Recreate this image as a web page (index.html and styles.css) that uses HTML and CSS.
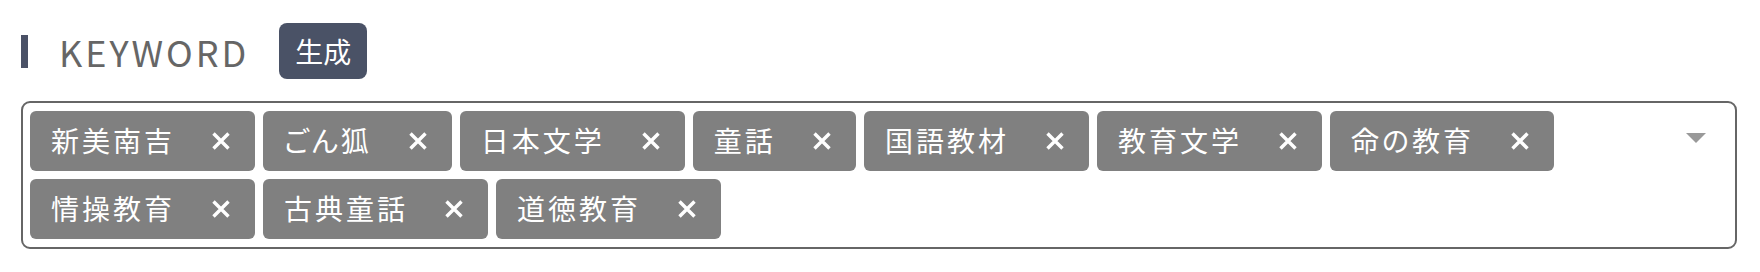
FILE: index.html
```html
<!DOCTYPE html>
<html lang="ja">
<head>
<meta charset="utf-8">
<title>KEYWORD</title>
<link rel="stylesheet" href="styles.css">
</head>
<body>
<div class="page">
  <div class="header">
    <span class="bar"></span>
    <h2 class="title">KEYWORD</h2>
    <button class="gen">生成</button>
  </div>
  <div class="select">
    <div class="tags">
      <span class="tag"><span class="label">新美南吉</span><svg class="x" viewBox="0 0 18 18"><path d="M1.5 1.5L16.5 16.5M16.5 1.5L1.5 16.5"/></svg></span>
      <span class="tag"><span class="label">ごん狐</span><svg class="x" viewBox="0 0 18 18"><path d="M1.5 1.5L16.5 16.5M16.5 1.5L1.5 16.5"/></svg></span>
      <span class="tag"><span class="label">日本文学</span><svg class="x" viewBox="0 0 18 18"><path d="M1.5 1.5L16.5 16.5M16.5 1.5L1.5 16.5"/></svg></span>
      <span class="tag"><span class="label">童話</span><svg class="x" viewBox="0 0 18 18"><path d="M1.5 1.5L16.5 16.5M16.5 1.5L1.5 16.5"/></svg></span>
      <span class="tag"><span class="label">国語教材</span><svg class="x" viewBox="0 0 18 18"><path d="M1.5 1.5L16.5 16.5M16.5 1.5L1.5 16.5"/></svg></span>
      <span class="tag"><span class="label">教育文学</span><svg class="x" viewBox="0 0 18 18"><path d="M1.5 1.5L16.5 16.5M16.5 1.5L1.5 16.5"/></svg></span>
      <span class="tag"><span class="label">命の教育</span><svg class="x" viewBox="0 0 18 18"><path d="M1.5 1.5L16.5 16.5M16.5 1.5L1.5 16.5"/></svg></span>
      <span class="tag"><span class="label">情操教育</span><svg class="x" viewBox="0 0 18 18"><path d="M1.5 1.5L16.5 16.5M16.5 1.5L1.5 16.5"/></svg></span>
      <span class="tag"><span class="label">古典童話</span><svg class="x" viewBox="0 0 18 18"><path d="M1.5 1.5L16.5 16.5M16.5 1.5L1.5 16.5"/></svg></span>
      <span class="tag"><span class="label">道徳教育</span><svg class="x" viewBox="0 0 18 18"><path d="M1.5 1.5L16.5 16.5M16.5 1.5L1.5 16.5"/></svg></span>
    </div>
    <svg class="caret" viewBox="0 0 20 10"><path d="M0 0H20L10 10Z"/></svg>
  </div>
</div>
</body>
</html>
```
FILE: styles.css
```css
html, body {
  margin: 0;
  padding: 0;
  background: #fff;
}
body {
  font-family: "Noto Sans CJK JP", "Noto Sans", sans-serif;
}
.page {
  padding: 23px 23px 0 21px;
}
.header {
  display: flex;
  align-items: center;
  height: 56px;
}
.bar {
  width: 7px;
  height: 33px;
  background: #4a5166;
}
.title {
  margin: 0 0 0 31px;
  font-size: 36px;
  font-weight: 400;
  letter-spacing: 3px;
  color: #666;
  line-height: 1;
}
.gen {
  margin-left: 30px;
  height: 56px;
  padding: 0 16px;
  border: none;
  border-radius: 8px;
  background: #4a5266;
  color: #fff;
  font-family: inherit;
  font-size: 28px;
  line-height: 1;
}
.select {
  margin-top: 22px;
  display: flex;
  align-items: flex-start;
  border: 2px solid #666;
  border-radius: 9px;
  padding: 8px 8px 8px 7px;
}
.tags {
  flex: 1;
  display: flex;
  flex-wrap: wrap;
  gap: 8px;
}
.tag {
  display: flex;
  align-items: center;
  height: 60px;
  padding: 0 25px 0 21px;
  background: #808080;
  border-radius: 6px;
  color: #fff;
  font-size: 28px;
}
.label {
  letter-spacing: 3px;
  font-feature-settings: "palt";
  line-height: 1;
  padding-bottom: 3px;
}
.x {
  width: 18px;
  height: 18px;
  margin-left: 37px;
  fill: none;
  stroke: #fff;
  stroke-width: 3.4;
}
.caret {
  width: 20px;
  height: 10px;
  margin: 22px 21px 0 20px;
  fill: #999;
}
```
